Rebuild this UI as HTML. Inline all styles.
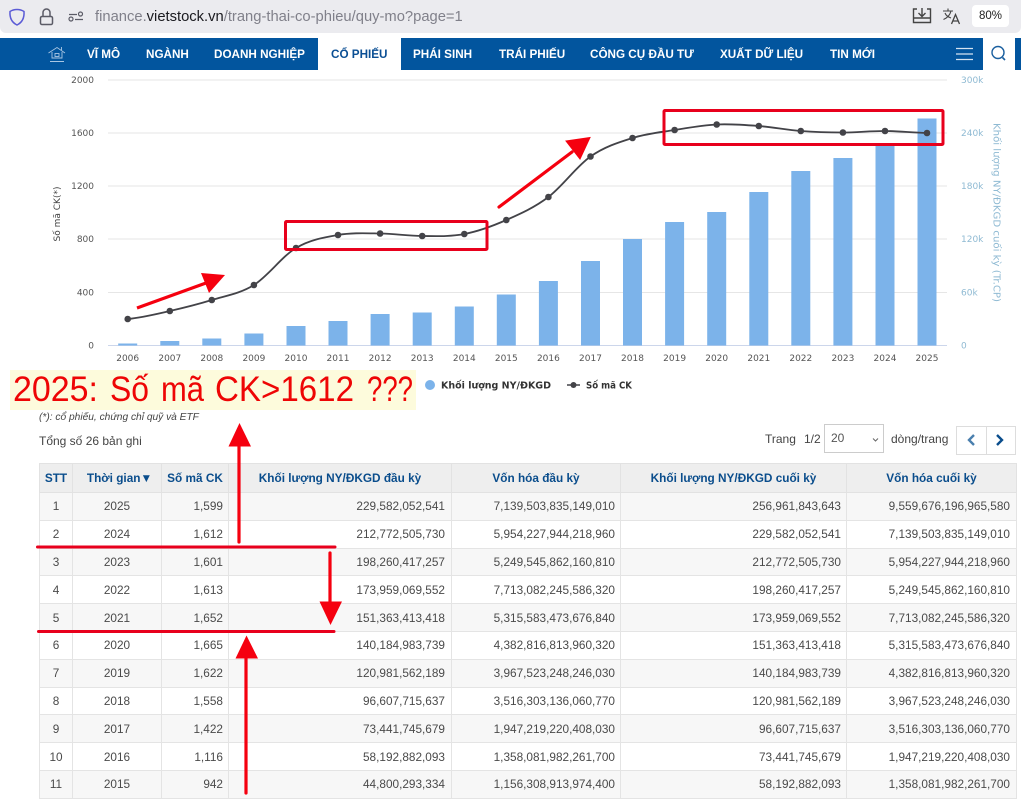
<!DOCTYPE html>
<html><head><meta charset="utf-8"><style>
html,body{margin:0;padding:0;background:#fff;}
body{width:1021px;height:800px;overflow:hidden;position:relative;font-family:"Liberation Sans",Arial,sans-serif;color:#444;}
.abs{position:absolute;white-space:nowrap;}
#bar{left:0;top:0;width:1021px;height:33px;background:#ebebef;border-radius:0 0 6px 6px;}
#url{left:95px;top:7px;font-size:14.75px;color:#80808a;line-height:20px;}
#url b{font-weight:normal;color:#1a1a1f;}
#zoom{left:972px;top:5px;width:37px;height:22px;background:#fff;border-radius:4px;font-size:11.5px;line-height:22px;text-align:center;color:#222;}
#nav{left:0;top:38px;width:1021px;height:32px;background:#02559e;}
.n{position:absolute;top:0;line-height:33px;font-size:11.7px;font-weight:bold;color:#fff;white-space:nowrap;}
#act{position:absolute;left:318px;top:0;width:83px;height:33px;background:#fff;}
#sr{position:absolute;left:983px;top:0;width:32px;height:34px;background:#fff;}
table{position:absolute;left:39px;top:463px;width:977px;border-collapse:collapse;table-layout:fixed;font-size:11.8px;}
th{height:28px;padding:0;background:#eee;color:#0a4d8c;font-weight:bold;border:1px solid #e2e2e2;text-align:center;}
td{height:26.8px;padding:0 5px;border:1px solid #e4e4e4;text-align:right;color:#4a4a4a;}
td.c{text-align:center;padding:0;}
td:nth-child(4),td:nth-child(7){padding-right:6px;}
tr:nth-child(odd) td{background:#f7f7f7;}
tr:nth-child(even) td{background:#fff;}
</style></head><body>
<div class="abs" id="bar"></div>
<div class="abs" id="url">finance.<b>vietstock.vn</b>/trang-thai-co-phieu/quy-mo?page=1</div>
<div class="abs" id="zoom">80%</div>
<svg class="abs" style="left:0;top:0" width="1021" height="33" fill="none">
<path d="M17 9.5 C20 9.5 22.5 10.5 24 11.5 C24.5 18 22 22.5 17 25 C12 22.5 9.5 18 10 11.5 C11.5 10.5 14 9.5 17 9.5Z" stroke="#5b5bd6" stroke-width="1.5"/>
<rect x="40.5" y="16.5" width="12" height="8" rx="1.5" stroke="#5b5b66" stroke-width="1.5"/>
<path d="M43 16.5V12.5a3.5 3.5 0 0 1 7 0V16.5" stroke="#5b5b66" stroke-width="1.5"/>
<path d="M69 14.5H77M75 19.5H83" stroke="#5b5b66" stroke-width="1.3"/>
<circle cx="80.5" cy="14" r="2" stroke="#5b5b66" stroke-width="1.2"/><circle cx="71" cy="19" r="2" stroke="#5b5b66" stroke-width="1.2"/>
<path d="M917 9H913.5V22.5H930.5V9H927M913.5 18H930.5M922 8V16M918.5 13L922 16.5L925.5 13" stroke="#444" stroke-width="1.4"/>
<path d="M943 11H953M948 8.5V11M951 11C950 15 947 18 943.5 19.5M945 13C946 15.5 948 17 951 18" stroke="#444" stroke-width="1.1"/>
<path d="M951.5 24L955.5 14.5L959.5 24M953 21H958" stroke="#444" stroke-width="1.3"/>
</svg>
<div class="abs" id="nav">
<div id="act"></div><div id="sr"></div>
<div class="n" style="left:87px">VĨ MÔ</div>
<div class="n" style="left:146px">NGÀNH</div>
<div class="n" style="left:214px">DOANH NGHIỆP</div>
<div class="n" style="left:331px;color:#0b4f94">CỔ PHIẾU</div>
<div class="n" style="left:413px">PHÁI SINH</div>
<div class="n" style="left:499px">TRÁI PHIẾU</div>
<div class="n" style="left:590px">CÔNG CỤ ĐẦU TƯ</div>
<div class="n" style="left:720px">XUẤT DỮ LIỆU</div>
<div class="n" style="left:830px">TIN MỚI</div>
<svg style="position:absolute;left:0;top:0" width="1021" height="34" fill="none">
<path d="M48.5 15L57 9.5L65 15M61.5 9V12M52 14V20H62V14M50 23.5H64" stroke="#a9c6e3" stroke-width="0.9"/>
<rect x="55" y="15.5" width="4" height="3" stroke="#a9c6e3" stroke-width="0.9"/>
<path d="M956 10.5H973M956 16H973M956 21.5H973" stroke="#d5e3f1" stroke-width="1.2"/>
<circle cx="998" cy="14.5" r="6" stroke="#1a5f9f" stroke-width="1.4"/><path d="M1002.5 19.5L1005 22" stroke="#1a5f9f" stroke-width="1.6"/>
</svg>
</div>

<svg class="abs" style="left:0;top:70px;overflow:visible" width="1021" height="340">
<g transform="translate(0,-70)">
<g stroke="#e6e6e6" stroke-width="1">
<path d="M108 80H947M108 133H947M108 186H947M108 239H947M108 292.5H947"/>
</g>
<path d="M108 345.5H947" stroke="#ccd6eb" stroke-width="1"/>
<g fill="#7cb3ea">
<rect x="118.2" y="343.5" width="19" height="2"/>
<rect x="160.3" y="341" width="19" height="4.5"/>
<rect x="202.3" y="338.5" width="19" height="7"/>
<rect x="244.4" y="333.5" width="19" height="12"/>
<rect x="286.5" y="326" width="19" height="19.5"/>
<rect x="328.5" y="321" width="19" height="24.5"/>
<rect x="370.6" y="314" width="19" height="31.5"/>
<rect x="412.7" y="312.5" width="19" height="33"/>
<rect x="454.8" y="306.5" width="19" height="39"/>
<rect x="496.8" y="294.5" width="19" height="51"/>
<rect x="538.9" y="281" width="19" height="64.5"/>
<rect x="581" y="261" width="19" height="84.5"/>
<rect x="623" y="239" width="19" height="106.5"/>
<rect x="665.1" y="222" width="19" height="123.5"/>
<rect x="707.2" y="212" width="19" height="133.5"/>
<rect x="749.3" y="192" width="19" height="153.5"/>
<rect x="791.3" y="171" width="19" height="174.5"/>
<rect x="833.4" y="158" width="19" height="187.5"/>
<rect x="875.5" y="146" width="19" height="199.5"/>
<rect x="917.5" y="118.5" width="19" height="227"/>
</g>
<path fill="none" stroke="#434348" stroke-width="1.8" d="M127.7 319 C141.7 317.7 155.8 314.2 169.8 311 S197.8 304.3 211.8 300 S239.9 293.7 253.9 285 S282 256.3 296 248 S324 237.4 338 235 S366.1 233.3 380.1 233.5 S408.2 235.9 422.2 236 S450.3 236.7 464.3 234 S492.3 226.2 506.3 220 S534.4 207.6 548.4 197 S576.5 166.3 590.5 156.5 S618.5 142.4 632.5 138 S660.6 132.3 674.6 130 S702.7 125.2 716.7 124.5 S744.8 124.9 758.8 126 S786.8 129.9 800.8 131 S828.9 132.5 842.9 132.5 S871 130.9 885 131 S913 132.7 927 133"/>
<g fill="#434348">
<circle cx="127.7" cy="319" r="3.3"/><circle cx="169.8" cy="311" r="3.3"/><circle cx="211.8" cy="300" r="3.3"/><circle cx="253.9" cy="285" r="3.3"/><circle cx="296" cy="248" r="3.3"/><circle cx="338" cy="235" r="3.3"/><circle cx="380.1" cy="233.5" r="3.3"/><circle cx="422.2" cy="236" r="3.3"/><circle cx="464.3" cy="234" r="3.3"/><circle cx="506.3" cy="220" r="3.3"/><circle cx="548.4" cy="197" r="3.3"/><circle cx="590.5" cy="156.5" r="3.3"/><circle cx="632.5" cy="138" r="3.3"/><circle cx="674.6" cy="130" r="3.3"/><circle cx="716.7" cy="124.5" r="3.3"/><circle cx="758.8" cy="126" r="3.3"/><circle cx="800.8" cy="131" r="3.3"/><circle cx="842.9" cy="132.5" r="3.3"/><circle cx="885" cy="131" r="3.3"/><circle cx="927" cy="133" r="3.3"/>
</g>
<g font-family="'DejaVu Sans',sans-serif" font-size="9" fill="#555" text-anchor="end">
<text x="94" y="83">2000</text><text x="94" y="136">1600</text><text x="94" y="189">1200</text><text x="94" y="242">800</text><text x="94" y="295.5">400</text><text x="94" y="348.5">0</text>
</g>
<g font-family="'DejaVu Sans',sans-serif" font-size="9" fill="#8fbad3">
<text x="961" y="83">300k</text><text x="961" y="136">240k</text><text x="961" y="189">180k</text><text x="961" y="242">120k</text><text x="961" y="295.5">60k</text><text x="961" y="348.5">0</text>
<text transform="translate(993.5,123) rotate(90)" font-size="10" textLength="179" lengthAdjust="spacingAndGlyphs">Khối lượng NY/ĐKGD cuối kỳ (Tr.CP)</text>
</g>
<text transform="translate(60,214) rotate(-90)" text-anchor="middle" font-family="'DejaVu Sans',sans-serif" font-size="9" fill="#444">Số mã CK(*)</text>
<g font-family="'DejaVu Sans',sans-serif" font-size="9" fill="#555" text-anchor="middle">
<text x="127.7" y="361">2006</text><text x="169.8" y="361">2007</text><text x="211.8" y="361">2008</text><text x="253.9" y="361">2009</text><text x="296" y="361">2010</text><text x="338" y="361">2011</text><text x="380.1" y="361">2012</text><text x="422.2" y="361">2013</text><text x="464.3" y="361">2014</text><text x="506.3" y="361">2015</text><text x="548.4" y="361">2016</text><text x="590.5" y="361">2017</text><text x="632.5" y="361">2018</text><text x="674.6" y="361">2019</text><text x="716.7" y="361">2020</text><text x="758.8" y="361">2021</text><text x="800.8" y="361">2022</text><text x="842.9" y="361">2023</text><text x="885" y="361">2024</text><text x="927" y="361">2025</text>
</g>
<circle cx="430" cy="385" r="5" fill="#7cb3ea"/>
<text x="441" y="388.5" font-family="'DejaVu Sans',sans-serif" font-size="9.5" font-weight="bold" fill="#333" textLength="110" lengthAdjust="spacingAndGlyphs">Khối lượng NY/ĐKGD</text>
<path d="M567 385H580" stroke="#434348" stroke-width="1.5"/><circle cx="573.5" cy="385" r="3" fill="#434348"/>
<text x="586" y="388.5" font-family="'DejaVu Sans',sans-serif" font-size="9.5" font-weight="bold" fill="#333" textLength="46" lengthAdjust="spacingAndGlyphs">Số mã CK</text>
</g>
</svg>

<div class="abs" style="left:10px;top:370px;width:406px;height:40px;background:#fdfbdc"></div>
<svg class="abs" style="left:0;top:360px" width="430" height="60">
<g font-family="'Liberation Sans',sans-serif" font-size="35.5" fill="#ee0505" lengthAdjust="spacingAndGlyphs">
<text x="13" y="41" textLength="85" lengthAdjust="spacingAndGlyphs">2025:</text>
<text x="110" y="41" textLength="39" lengthAdjust="spacingAndGlyphs">Số</text>
<text x="161" y="41" textLength="43" lengthAdjust="spacingAndGlyphs">mã</text>
<text x="215" y="41" textLength="139" lengthAdjust="spacingAndGlyphs">CK&gt;1612</text>
<text x="367" y="41" textLength="46" lengthAdjust="spacingAndGlyphs">???</text>
</g>
</svg>
<div class="abs" style="left:39px;top:411px;font-size:10.2px;font-style:italic;line-height:13px;color:#444">(*): cổ phiếu, chứng chỉ quỹ và ETF</div>
<div class="abs" style="left:39px;top:434px;font-size:12px;line-height:15px;color:#444">Tổng số 26 bản ghi</div>
<div class="abs" style="left:765px;top:432px;font-size:12px;line-height:15px;color:#444">Trang</div>
<div class="abs" style="left:804px;top:432px;font-size:12px;line-height:15px;color:#444">1/2</div>
<div class="abs" style="left:824px;top:424px;width:58px;height:27px;border:1px solid #ccc;font-size:12px;line-height:27px;color:#555;text-indent:6px">20</div>
<div class="abs" style="left:891px;top:432px;font-size:12px;line-height:15px;color:#444">dòng/trang</div>
<div class="abs" style="left:956px;top:426px;width:58px;height:27px;border:1px solid #ddd"></div>
<div class="abs" style="left:986px;top:426px;width:1px;height:28px;background:#ddd"></div>
<svg class="abs" style="left:860px;top:425px" width="160" height="32" fill="none">
<path d="M13 13.5L15.5 16L18 13.5" stroke="#666" stroke-width="1"/>
<path d="M114 10L109 15L114 20" stroke="#4a7fae" stroke-width="2.4"/>
<path d="M137 10L142 15L137 20" stroke="#0a4d8c" stroke-width="2.4"/>
</svg>

<table>
<colgroup><col style="width:33px"><col style="width:89px"><col style="width:67px"><col style="width:223px"><col style="width:169px"><col style="width:226px"><col style="width:170px"></colgroup>
<thead><tr><th>STT</th><th style="padding-left:5px">Thời gian▼</th><th>Số mã CK</th><th>Khối lượng NY/ĐKGD đầu kỳ</th><th>Vốn hóa đầu kỳ</th><th>Khối lượng NY/ĐKGD cuối kỳ</th><th>Vốn hóa cuối kỳ</th></tr></thead>
<tbody>
<tr><td class="c">1</td><td class="c">2025</td><td>1,599</td><td>229,582,052,541</td><td>7,139,503,835,149,010</td><td>256,961,843,643</td><td>9,559,676,196,965,580</td></tr>
<tr><td class="c">2</td><td class="c">2024</td><td>1,612</td><td>212,772,505,730</td><td>5,954,227,944,218,960</td><td>229,582,052,541</td><td>7,139,503,835,149,010</td></tr>
<tr><td class="c">3</td><td class="c">2023</td><td>1,601</td><td>198,260,417,257</td><td>5,249,545,862,160,810</td><td>212,772,505,730</td><td>5,954,227,944,218,960</td></tr>
<tr><td class="c">4</td><td class="c">2022</td><td>1,613</td><td>173,959,069,552</td><td>7,713,082,245,586,320</td><td>198,260,417,257</td><td>5,249,545,862,160,810</td></tr>
<tr><td class="c">5</td><td class="c">2021</td><td>1,652</td><td>151,363,413,418</td><td>5,315,583,473,676,840</td><td>173,959,069,552</td><td>7,713,082,245,586,320</td></tr>
<tr><td class="c">6</td><td class="c">2020</td><td>1,665</td><td>140,184,983,739</td><td>4,382,816,813,960,320</td><td>151,363,413,418</td><td>5,315,583,473,676,840</td></tr>
<tr><td class="c">7</td><td class="c">2019</td><td>1,622</td><td>120,981,562,189</td><td>3,967,523,248,246,030</td><td>140,184,983,739</td><td>4,382,816,813,960,320</td></tr>
<tr><td class="c">8</td><td class="c">2018</td><td>1,558</td><td>96,607,715,637</td><td>3,516,303,136,060,770</td><td>120,981,562,189</td><td>3,967,523,248,246,030</td></tr>
<tr><td class="c">9</td><td class="c">2017</td><td>1,422</td><td>73,441,745,679</td><td>1,947,219,220,408,030</td><td>96,607,715,637</td><td>3,516,303,136,060,770</td></tr>
<tr><td class="c">10</td><td class="c">2016</td><td>1,116</td><td>58,192,882,093</td><td>1,358,081,982,261,700</td><td>73,441,745,679</td><td>1,947,219,220,408,030</td></tr>
<tr><td class="c">11</td><td class="c">2015</td><td>942</td><td>44,800,293,334</td><td>1,156,308,913,974,400</td><td>58,192,882,093</td><td>1,358,081,982,261,700</td></tr>
</tbody></table>

<svg class="abs" style="left:0;top:0;pointer-events:none" width="1021" height="800" fill="none">
<rect x="285.5" y="221.5" width="201.5" height="28" stroke="#e8001c" stroke-width="3" rx="1"/>
<rect x="664" y="110.5" width="279" height="34" stroke="#e8001c" stroke-width="3" rx="1"/>
<path d="M137 308L206 283" stroke="#f5000f" stroke-width="3.2"/>
<path d="M201 273L225 275L209 293Z" fill="#f5000f"/>
<path d="M499 207L572 152" stroke="#f5000f" stroke-width="3.2" stroke-linecap="round"/>
<path d="M566 141L590 137.5L580 159Z" fill="#f5000f" stroke="#f5000f" stroke-width="1"/>
<path d="M37.5 547H335M38.5 631.5H334" stroke="#e8001c" stroke-width="3" stroke-linecap="round"/>
<path d="M330 553V602" stroke="#f5000f" stroke-width="3.2" stroke-linecap="round"/>
<path d="M319.5 601.5H342L330.5 625Z" fill="#f5000f"/>
<path d="M239 542V445" stroke="#f5000f" stroke-width="3.2" stroke-linecap="round"/>
<path d="M228.5 446.5H251L239.5 423Z" fill="#f5000f"/>
<path d="M246 793V656" stroke="#f5000f" stroke-width="3.2" stroke-linecap="round"/>
<path d="M235.5 658.5H258L246.5 635.5Z" fill="#f5000f"/>
</svg>
</body></html>
